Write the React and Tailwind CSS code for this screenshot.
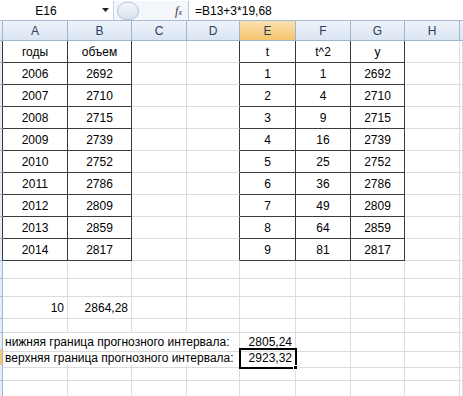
import React from 'react';

const cols = ['A', 'B', 'C', 'D', 'E', 'F', 'G', 'H'];
const years = [2006, 2007, 2008, 2009, 2010, 2011, 2012, 2013, 2014];
const volumes = [2692, 2710, 2715, 2739, 2752, 2786, 2809, 2859, 2817];

const gridTpl = 'grid grid-cols-[3px_65px_64px_55px_53px_56px_55px_54px_55px_1fr]';

function Cell({ children, dark, edge, align = 'center', className = '' }) {
  const alignCls = align === 'right' ? 'justify-end pr-[3px]' : align === 'left' ? 'justify-start pl-[3px]' : 'justify-center';
  const borderCls = dark
    ? 'border-[#3a3a3a]'
    : edge
      ? 'border-[#dadcdd] border-r-[#3a3a3a]'
      : 'border-[#dadcdd]';
  return (
    <div className={`flex items-center whitespace-nowrap border-r border-b ${borderCls} ${alignCls} ${className}`}>
      {children}
    </div>
  );
}

function RowHead({ active }) {
  return <div className={`border-r border-b border-[#9eb6ce] ${active ? 'bg-[#f6c774]' : 'bg-[#e4ecf7]'}`} />;
}

function TableRow({ h, a, b, e, f, g }) {
  return (
    <div className={`${gridTpl} ${h}`}>
      <div className="border-r border-b border-[#9eb6ce] border-r-[#3a3a3a] bg-[#e4ecf7]" />
      <Cell dark>{a}</Cell>
      <Cell dark>{b}</Cell>
      <Cell />
      <Cell edge />
      <Cell dark>{e}</Cell>
      <Cell dark>{f}</Cell>
      <Cell dark>{g}</Cell>
      <Cell />
      <Cell />
    </div>
  );
}

function EmptyRow({ h }) {
  return (
    <div className={`${gridTpl} ${h}`}>
      <RowHead />
      {cols.map((c) => (
        <Cell key={c} />
      ))}
      <Cell />
    </div>
  );
}

export default function App() {
  return (
    <div className="w-[463px] h-[396px] overflow-hidden bg-white text-[12px] text-black font-['Liberation_Sans',Arial,sans-serif]">
      {/* formula bar */}
      <div className="flex h-[21px] items-stretch border-b border-[#a7bad1] bg-white pt-[1px]">
        <div className="flex w-[114px] items-center border-r border-[#c5d2e2]">
          <span className="w-[92px] text-center">E16</span>
          <svg width="8" height="5" viewBox="0 0 8 5" className="ml-[10px]">
            <path d="M0 0h7L3.5 4z" fill="#222" />
          </svg>
        </div>
        <div className="relative flex w-[74px] items-center bg-[#f3f6fb]">
          <div className="ml-[3px] h-[18px] w-[22px] rounded-full border border-[#b6c6da] bg-gradient-to-b from-[#f4f7fb] to-[#d6e1ee]" />
          <span className="ml-auto mr-[6px] font-['Liberation_Serif',serif] text-[12px] italic text-[#333]">
            f<span className="text-[8px]">x</span>
          </span>
        </div>
        <div className="flex flex-1 items-center border-l border-[#b9c7d8] pl-[6px]">=B13+3*19,68</div>
      </div>

      {/* column headers */}
      <div className={`${gridTpl} h-[20px] text-[#27415f]`}>
        <div className="border-r border-b border-[#9eb6ce] bg-gradient-to-b from-[#eef3fa] to-[#dbe5f2]" />
        {cols.map((c) => (
          <div
            key={c}
            className={`flex items-center justify-center border-r border-b border-[#9eb6ce] ${
              c === 'E' ? 'bg-gradient-to-b from-[#fbe2b0] to-[#f5c46d]' : 'bg-gradient-to-b from-[#eef3fa] to-[#dbe5f2]'
            }`}
          >
            {c}
          </div>
        ))}
        <div className="border-b border-[#9eb6ce] bg-gradient-to-b from-[#eef3fa] to-[#dbe5f2]" />
      </div>

      <TableRow h="h-[22px]" a="годы" b="объем" e="t" f="t^2" g="y" />
      {years.map((y, i) => (
        <TableRow key={y} h="h-[22px]" a={y} b={volumes[i]} e={i + 1} f={(i + 1) * (i + 1)} g={volumes[i]} />
      ))}

      <EmptyRow h="h-[18px]" />
      <EmptyRow h="h-[18px]" />

      <div className={`${gridTpl} h-[22px]`}>
        <RowHead />
        <Cell align="right">10</Cell>
        <Cell align="right">2864,28</Cell>
        <Cell />
        <Cell />
        <Cell />
        <Cell />
        <Cell />
        <Cell />
        <Cell />
      </div>

      <EmptyRow h="h-[14px]" />

      <div className={`${gridTpl} h-[16px]`}>
        <RowHead />
        <div className="col-span-4 flex items-center whitespace-nowrap border-r border-b border-[#dadcdd] pl-[2px]">
          нижняя граница прогнозного интервала:
        </div>
        <Cell align="right">2805,24</Cell>
        <Cell />
        <Cell />
        <Cell />
        <Cell />
      </div>

      <div className={`${gridTpl} h-[16px]`}>
        <RowHead active />
        <div className="col-span-4 flex items-center whitespace-nowrap border-r border-b border-[#dadcdd] pl-[2px]">
          верхняя граница прогнозного интервала:
        </div>
        <div className="relative flex items-center justify-end pr-[3px] outline-2 outline-black -outline-offset-1 border-r border-b border-black">
          2923,32
          <span className="absolute -bottom-[3px] -right-[3px] h-[5px] w-[5px] border border-white bg-black" />
        </div>
        <Cell />
        <Cell />
        <Cell />
        <Cell />
      </div>

      <EmptyRow h="h-[16px]" />
      <EmptyRow h="h-[16px]" />
    </div>
  );
}
